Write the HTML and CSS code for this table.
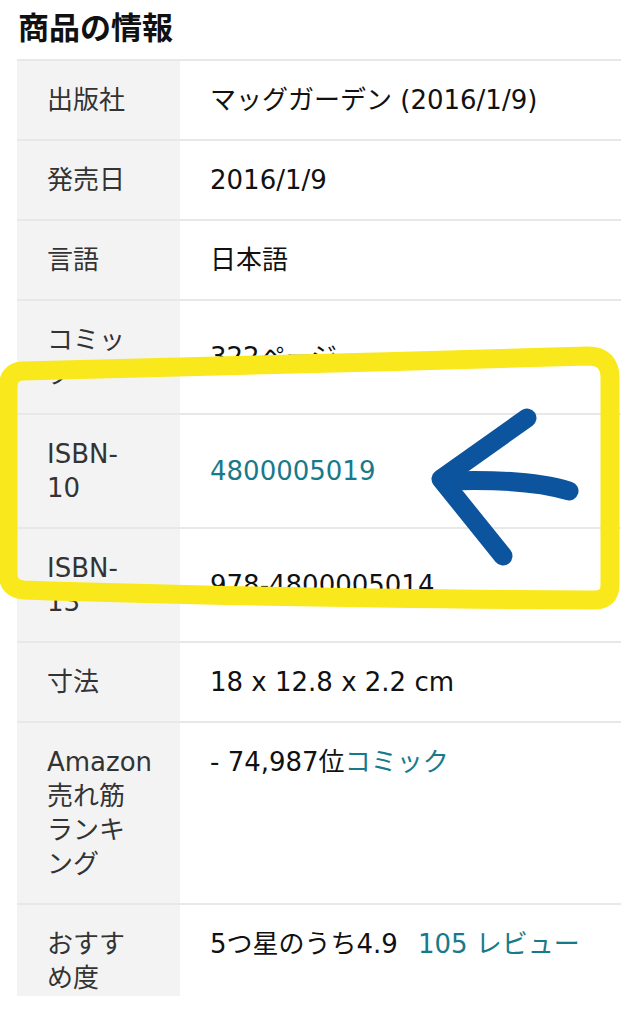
FILE: index.html
```html
<!DOCTYPE html>
<html lang="ja">
<head>
<meta charset="utf-8">
<title>商品の情報</title>
<link rel="stylesheet" href="styles.css">
</head>
<body>
<div class="page">
  <h1 class="title">商品の情報</h1>
  <table class="details">
    <colgroup><col class="col-label"><col></colgroup>
    <tr><th>出版社</th><td>マッグガーデン (2016/1/9)</td></tr>
    <tr><th>発売日</th><td>2016/1/9</td></tr>
    <tr><th>言語</th><td>日本語</td></tr>
    <tr><th>コミック</th><td>322ページ</td></tr>
    <tr><th>ISBN-<br>10</th><td><a class="link" href="#">4800005019</a></td></tr>
    <tr><th>ISBN-<br>13</th><td>978-4800005014</td></tr>
    <tr><th>寸法</th><td>18 x 12.8 x 2.2 cm</td></tr>
    <tr class="top"><th>Amazon 売れ筋ランキング</th><td>- 74,987位<a class="link" href="#">コミック</a></td></tr>
    <tr class="top"><th>おすすめ度</th><td>5つ星のうち4.9<span class="gap"></span><a class="link" href="#">105 レビュー</a></td></tr>
  </table>
  <svg class="marks" width="644" height="1024" viewBox="0 0 644 1024" aria-hidden="true">
    <path class="hl" d="M 22 371 C 200 368, 400 361, 588 356 Q 610 356 610 378 L 610 585 Q 610 600 594 600 C 400 599, 200 596, 24 590 Q 8 589 8 573 L 8 388 Q 8 372 22 371 Z"/>
    <path class="arrow" d="M 527 418 L 441 479 L 503 556"/>
    <path class="arrow" d="M 445 481 C 500 479, 540 482, 569 491"/>
  </svg>
</div>
</body>
</html>
```
FILE: styles.css
```css
html, body {
  margin: 0;
  padding: 0;
  background: #fff;
}
.page {
  position: relative;
  width: 644px;
  height: 996px;
  overflow: hidden;
  font-family: "DejaVu Sans", "Noto Sans CJK JP", sans-serif;
}
.title {
  margin: 0 0 13px 18px;
  padding-top: 6px;
  font-family: "Noto Sans CJK JP", sans-serif;
  font-size: 31px;
  line-height: 40px;
  font-weight: 700;
  color: #111;
}
.details {
  margin-left: 17px;
  width: 604px;
  table-layout: fixed;
  border-collapse: collapse;
  font-size: 26px;
  line-height: 34px;
}
.col-label {
  width: 163px;
}
.details tr {
  border-top: 2px solid #e8e8e8;
}
.details th,
.details td {
  padding: 22px 30px;
  text-align: left;
  vertical-align: middle;
  font-weight: 400;
}
.details th {
  background: #f3f3f3;
  color: #333;
  white-space: normal;
}
.details td {
  color: #111;
}
.details tr.top td {
  vertical-align: top;
}
.link {
  color: #177a8b;
  text-decoration: none;
}
.gap {
  display: inline-block;
  width: 20px;
}
.marks {
  position: absolute;
  left: 0;
  top: 0;
  pointer-events: none;
}
.hl {
  fill: none;
  stroke: #f9e81b;
  stroke-width: 19;
  stroke-linejoin: round;
}
.arrow {
  fill: none;
  stroke: #0c559e;
  stroke-width: 19;
  stroke-linecap: round;
  stroke-linejoin: round;
}
```
